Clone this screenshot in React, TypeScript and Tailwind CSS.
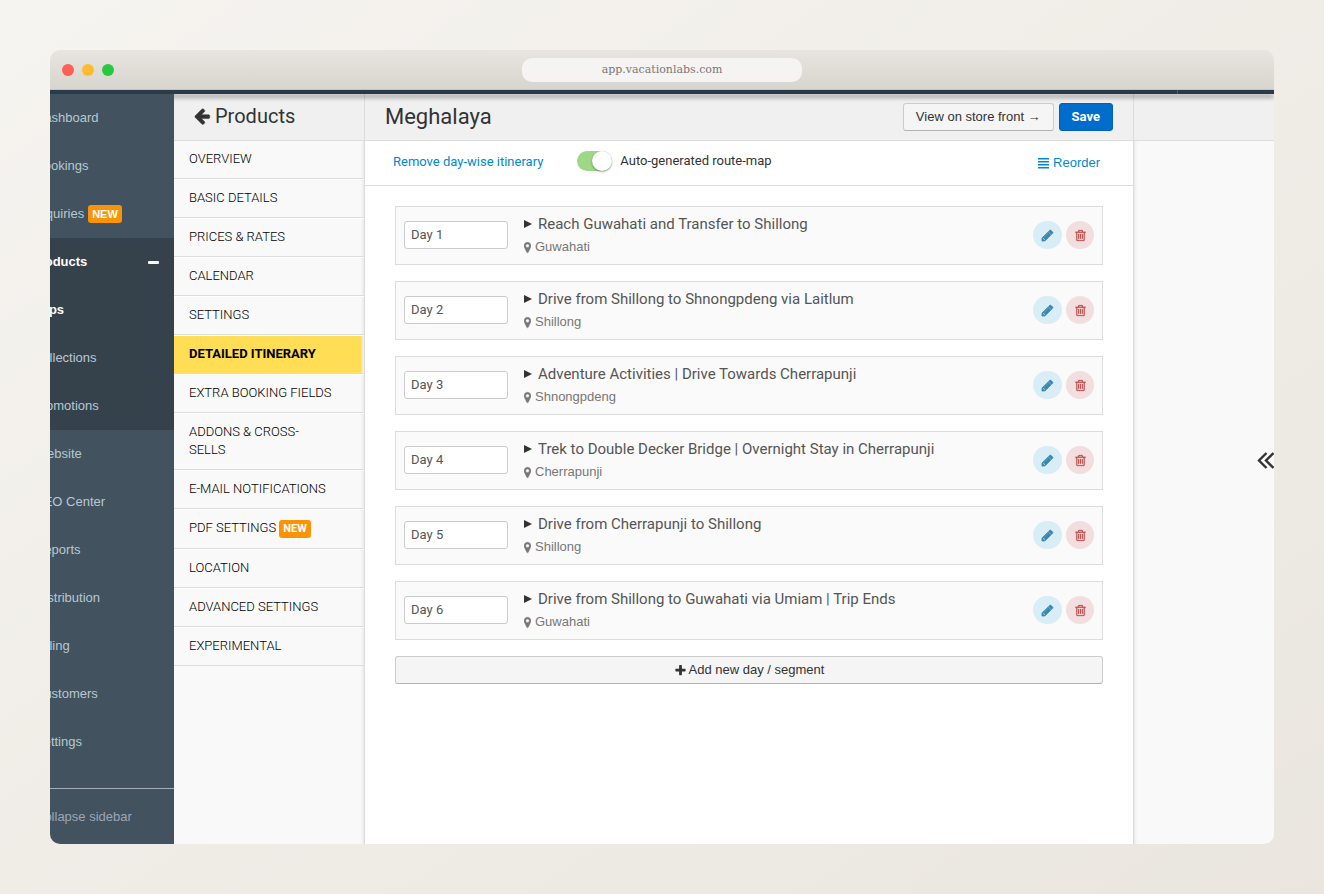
import React, { useState } from 'react';

interface MenuItem {
    label: string;
    isNew?: boolean;
    active?: boolean;
}

interface Day {
    id: number;
    title: string;
    place: string;
}

const mainTop: MenuItem[] = [
    { label: 'Dashboard' },
    { label: 'Bookings' },
    { label: 'Inquiries', isNew: true },
];

const mainProducts: MenuItem[] = [
    { label: 'Trips', active: true },
    { label: 'Collections' },
    { label: 'Promotions' },
];

const mainBottom: MenuItem[] = [
    { label: 'Website' },
    { label: 'SEO Center' },
    { label: 'Reports' },
    { label: 'Distribution' },
    { label: 'Billing' },
    { label: 'Customers' },
    { label: 'Settings' },
];

const productMenu: MenuItem[] = [
    { label: 'Overview' },
    { label: 'Basic details' },
    { label: 'Prices & rates' },
    { label: 'Calendar' },
    { label: 'Settings' },
    { label: 'Detailed itinerary', active: true },
    { label: 'Extra booking fields' },
    { label: 'Addons & cross-sells' },
    { label: 'E-mail notifications' },
    { label: 'PDF settings', isNew: true },
    { label: 'Location' },
    { label: 'Advanced settings' },
    { label: 'Experimental' },
];

const days: Day[] = [
    { id: 1, title: 'Reach Guwahati and Transfer to Shillong', place: 'Guwahati' },
    { id: 2, title: 'Drive from Shillong to Shnongpdeng via Laitlum', place: 'Shillong' },
    { id: 3, title: 'Adventure Activities | Drive Towards Cherrapunji', place: 'Shnongpdeng' },
    { id: 4, title: 'Trek to Double Decker Bridge | Overnight Stay in Cherrapunji', place: 'Cherrapunji' },
    { id: 5, title: 'Drive from Cherrapunji to Shillong', place: 'Shillong' },
    { id: 6, title: 'Drive from Shillong to Guwahati via Umiam | Trip Ends', place: 'Guwahati' },
];

// Icon outlines, all on a 1792 grid
const icons = {
    arrowLeft: 'M1664 896v128q0 53-32.5 90.5t-84.5 37.5h-704l293 294q38 36 38 90t-38 90l-75 76q-37 37-90 37-52 0-91-37l-651-652q-37-37-37-90 0-52 37-91l651-650q38-38 91-38 52 0 90 38l75 74q38 38 38 91t-38 91l-293 293h704q52 0 84.5 37.5t32.5 90.5z',
    marker: 'M1152 640q0-106-75-181t-181-75-181 75-75 181 75 181 181 75 181-75 75-181zm256 0q0 109-33 179l-364 774q-16 33-47.5 52t-67.5 19-67.5-19-46.5-52l-365-774q-33-70-33-179 0-212 150-362t362-150 362 150 150 362z',
    pencil: 'M491 1536l91-91-235-235-91 91v107h128v128h107zm523-928q0-22-22-22-10 0-17 7l-542 542q-7 7-7 17 0 22 22 22 10 0 17-7l542-542q7-7 7-17zm-54-192l416 416-832 832h-416v-416zm683 96q0 53-37 90l-166 166-416-416 166-165q36-38 90-38 53 0 91 38l235 234q37 39 37 91z',
    trash: 'M704 736v576q0 14-9 23t-23 9h-64q-14 0-23-9t-9-23v-576q0-14 9-23t23-9h64q14 0 23 9t9 23zm256 0v576q0 14-9 23t-23 9h-64q-14 0-23-9t-9-23v-576q0-14 9-23t23-9h64q14 0 23 9t9 23zm256 0v576q0 14-9 23t-23 9h-64q-14 0-23-9t-9-23v-576q0-14 9-23t23-9h64q14 0 23 9t9 23zm128 724v-948h-896v948q0 22 7 40.5t14.5 27 10.5 8.5h832q3 0 10.5-8.5t14.5-27 7-40.5zm-672-1076h448l-48-117q-7-9-17-11h-317q-10 2-17 11zm928 32v64q0 14-9 23t-23 9h-96v948q0 83-47 143.5t-113 60.5h-832q-66 0-113-58.5t-47-141.5v-952h-96q-14 0-23-9t-9-23v-64q0-14 9-23t23-9h309l70-167q15-37 54-63t79-26h320q40 0 79 26t54 63l70 167h309q14 0 23 9t9 23z',
    plus: 'M1600 736v192q0 40-28 68t-68 28h-416v416q0 40-28 68t-68 28h-192q-40 0-68-28t-28-68v-416h-416q-40 0-68-28t-28-68v-192q0-40 28-68t68-28h416v-416q0-40 28-68t68-28h192q40 0 68 28t28 68v416h416q40 0 68 28t28 68z',
};

const Icon: React.FC<{ name: keyof typeof icons; className: string; weight?: number }> = ({ name, className, weight = 0 }) => (
    <svg viewBox="0 0 1792 1792" fill="currentColor" stroke="currentColor" strokeWidth={weight} aria-hidden="true" className={`shrink-0 ${className}`}>
        <path d={icons[name]} />
    </svg>
);

const NewBadge: React.FC = () => (
    <span className="inline-block bg-[#fb9405] text-white text-[11px] leading-[18px] font-bold rounded-[3px] px-1">NEW</span>
);

const MainLink: React.FC<{ item: MenuItem; className?: string }> = ({ item, className = 'pl-[35px]' }) => (
    <li>
        <a href="#" className={`h-12 flex items-center gap-1 ${className} ${item.active ? 'font-bold text-white' : ''}`}>
            {item.label}
            {item.isNew && <NewBadge />}
        </a>
    </li>
);

const MainSidebar: React.FC = () => (
    // Slides under the left edge of the window
    <nav className="relative z-20 shrink-0 w-[174px] -ml-[50px] bg-[#42525f] text-[#b9c8d0] text-[13px] flex flex-col">
        <ul>{mainTop.map((item) => <MainLink key={item.label} item={item} />)}</ul>
        <div className="bg-[#36424b]">
            <button type="button" className="w-full h-12 pl-[31px] pr-[15px] flex items-center justify-between font-bold text-white">
                Products
                <span className="w-[11px] h-[3px] rounded-[1px] bg-white"></span>
            </button>
            <ul>{mainProducts.map((item) => <MainLink key={item.label} item={item} className="pl-[33px]" />)}</ul>
        </div>
        <ul>{mainBottom.map((item) => <MainLink key={item.label} item={item} />)}</ul>
        <button type="button" className="mt-auto h-14 pl-[35px] border-t border-[#a3abbd] text-left text-[#9aa7b6]">
            Collapse sidebar
        </button>
    </nav>
);

const ProductSidebar: React.FC = () => (
    <aside className="shrink-0 w-[191px] flex flex-col border-r border-[#dcdcdc] bg-[#f9f9f9] font-[Roboto,sans-serif]">
        <h2 className="h-[47px] pl-[19px] border-b border-[#dcdcdc] bg-[#f0f0f0]">
            <a href="#" className="h-11 flex items-center gap-1 text-xl text-[#333]">
                <Icon name="arrowLeft" className="w-[18px] h-[18px]" weight={50} />
                Products
            </a>
        </h2>
        <ul className="flex-1 text-[13px] leading-[18px] uppercase text-black shadow-[inset_-4px_0_3px_-3px_#e4e4e4]">
            {productMenu.map((item) => (
                <li key={item.label} className="border-t border-b border-t-white border-b-[#dcdcdc] first:border-t-0">
                    <a
                        href="#"
                        className={`block pt-[9px] pb-[10px] pl-[15px] pr-[30px] ${item.active ? 'bg-[#ffdd55] font-bold shadow-[inset_-3px_0_2px_-1px_#f0f0f0]' : 'font-light'}`}
                    >
                        {item.label}
                        {item.isNew && <> <NewBadge /></>}
                    </a>
                </li>
            ))}
        </ul>
    </aside>
);

const DayCard: React.FC<{ day: Day }> = ({ day }) => (
    <li className="h-[59px] pl-2 pr-2 flex items-start border border-[#dcdcdc] bg-[#fafafa] font-[Roboto,sans-serif]">
        <input
            type="text"
            aria-label={`Label of day ${day.id}`}
            defaultValue={`Day ${day.id}`}
            className="mt-[14px] w-[104px] h-7 px-1.5 pb-0.5 border border-[#ccc] rounded-[3px] bg-white text-[13px] text-[#555]"
        />
        <div className="flex-1 min-w-0 pl-4 pt-[7px]">
            <button type="button" className="flex items-center gap-1.5 text-[15px] leading-5 text-[#555]">
                <svg viewBox="0 0 8 10" className="w-2 h-2.5 text-[#333]" aria-hidden="true">
                    <path d="M0 1l8 4-8 4z" fill="currentColor" />
                </svg>
                {day.title}
            </button>
            <p className="mt-[3px] flex items-center font-['Liberation_Sans',sans-serif] text-[13px] leading-5 text-[#777]">
                <svg viewBox="384 0 1024 1792" fill="currentColor" stroke="currentColor" strokeWidth="60" aria-hidden="true" className="mr-1 w-[7px] h-[13px]">
                    <path d={icons.marker} />
                </svg>
                {day.place}
            </p>
        </div>
        <div className="mt-[14px] flex gap-1">
            <button type="button" aria-label="Edit" className="w-[29px] h-7 rounded-full bg-[#d9edf7] text-[#3a87ad] flex items-center justify-center">
                <Icon name="pencil" className="w-[13px] h-[13px]" weight={90} />
            </button>
            <button type="button" aria-label="Delete" className="w-7 h-7 rounded-full bg-[#f2dede] text-[#b94a48] flex items-center justify-center">
                <Icon name="trash" className="w-[13px] h-[13px]" weight={30} />
            </button>
        </div>
    </li>
);

const ItineraryEditor: React.FC = () => {
    const [routeMap, setRouteMap] = useState(true);

    return (
        <main className="flex-1 min-w-0 bg-white">
            <header className="h-[47px] pl-5 pr-5 flex items-center border-b border-[#dcdcdc] bg-[#f0f0f0]">
                <h1 className="flex-1 font-[Roboto,sans-serif] text-[22px] leading-6 text-[#333]">Meghalaya</h1>
                <button type="button" className="h-7 px-3 border border-[#ccc] border-b-[#b3b3b3] rounded-[3px] bg-[#f5f5f5] text-[13px] text-[#333]">
                    View on store front →
                </button>
                <button type="button" className="ml-[5px] h-7 px-3 border border-[#005fb8] rounded-[3px] bg-[#006dcc] font-[Roboto,sans-serif] text-[13px] font-bold text-white">
                    Save
                </button>
            </header>

            <div className="h-[45px] pl-7 pr-[33px] flex items-center border-b border-[#dcdcdc] font-[Roboto,sans-serif] text-[13px] text-[#0088cc]">
                <a href="#" className="pb-[3px]">Remove day-wise itinerary</a>
                <label className="ml-[34px] pb-1 flex items-center gap-2 text-[#333] cursor-pointer">
                    <input type="checkbox" className="peer sr-only" checked={routeMap} onChange={() => setRouteMap(!routeMap)} />
                    <span className={`w-[35px] h-5 flex rounded-full ${routeMap ? 'justify-end bg-[#9cd886]' : 'justify-start bg-[#ccc]'}`}>
                        <span className="w-5 h-5 rounded-full bg-white shadow-[0_1px_2px_rgba(0,0,0,0.4)]"></span>
                    </span>
                    Auto-generated route-map
                </label>
                <a href="#" className="ml-auto flex items-center gap-1 font-['Liberation_Sans',sans-serif]">
                    <svg viewBox="0 0 11 11" fill="currentColor" className="w-[11px] h-[11px]" aria-hidden="true">
                        <path d="M0 0h11v1.500H0zM0 3h11v1.500H0zM0 6h11v1.500H0zM0 9h11v1.500H0z" />
                    </svg>
                    Reorder
                </a>
            </div>

            <div className="px-[30px] pt-5 pb-8">
                <ul className="flex flex-col gap-4">
                    {days.map((day) => <DayCard key={day.id} day={day} />)}
                </ul>
                <button type="button" className="mt-4 w-full h-7 flex items-center justify-center gap-0.5 border border-[#ccc] border-b-[#b3b3b3] rounded-[3px] bg-[#f5f5f5] text-[13px] text-[#333]">
                    <Icon name="plus" className="w-[13px] h-[13px]" />
                    Add new day / segment
                </button>
            </div>
        </main>
    );
};

const HelpPanel: React.FC = () => (
    <aside className="shrink-0 w-[141px] flex flex-col border-l border-[#dcdcdc] bg-[#f9f9f9]">
        <div className="h-[47px] border-b border-[#dcdcdc] bg-[#f0f0f0]"></div>
        <div className="flex-1 flex items-center justify-end shadow-[inset_4px_0_3px_-3px_#e4e4e4]">
            <button type="button" aria-label="Open panel" className="mb-16 text-[#333]">
                <svg viewBox="0 0 17 18" className="w-[17px] h-[18px]" fill="none" stroke="currentColor" strokeWidth="2.4" aria-hidden="true">
                    <path d="M9.500 1L2 8.500L9.500 16M16.500 1L9 8.500L16.500 16" />
                </svg>
            </button>
        </div>
    </aside>
);

const App: React.FC = () => (
    <div className="min-h-screen p-[50px] flex bg-linear-to-br from-[#f6f4f0] to-[#eae6df] font-['Liberation_Sans',sans-serif]">
        <div className="flex-1 min-w-0 flex flex-col rounded-[10px] overflow-hidden">
            <div className="h-10 px-3 flex items-center border-b border-[#c9c4bd] bg-linear-to-b from-[#e8e4df] to-[#d8d4ce]">
                <div className="flex-1 flex gap-2">
                    <span className="w-3 h-3 rounded-full bg-[#ff5f57]"></span>
                    <span className="w-3 h-3 rounded-full bg-[#febc2e]"></span>
                    <span className="w-3 h-3 rounded-full bg-[#28c840]"></span>
                </div>
                <div className="w-[280px] h-6 rounded-[10px] bg-[#f5f4f2] text-center font-['DejaVu_Serif',serif] text-[11px] leading-6 text-[#7a7672]">
                    app.vacationlabs.com
                </div>
                <div className="flex-1"></div>
            </div>
            <div className="relative z-10 h-1 pr-24 flex justify-end bg-[#293a49] shadow-[0_4px_4px_rgba(0,0,0,0.3)]">
                <span className="w-px bg-[#4d5b68]"></span>
            </div>
            <div className="flex-1 flex">
                <MainSidebar />
                <ProductSidebar />
                <ItineraryEditor />
                <HelpPanel />
            </div>
        </div>
    </div>
);

export default App;
